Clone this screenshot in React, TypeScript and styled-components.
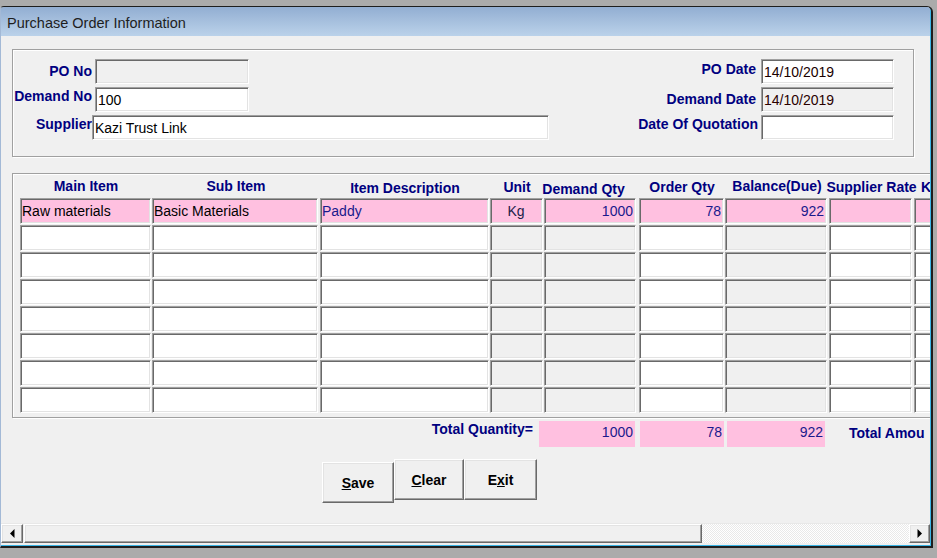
import React from "react";
import styled, { createGlobalStyle } from "styled-components";

const GlobalStyle = createGlobalStyle`
  html, body { margin: 0; padding: 0; background: #ababab; }
  body { font-family: "Liberation Sans", Arial, sans-serif; }
  * { box-sizing: border-box; }
`;

const NAVY = "#000080";
const PINK = "#ffc0e0";
const FACE = "#f0f0f0";

const Page = styled.div`
  height: 558px;
  padding-top: 6px;
  overflow: hidden;
  background: #ababab;
`;

const Window = styled.div`
  width: 933px;
  height: 542px;
  border-top: 1px solid #1e1e1e;
  border-right: 2px solid #1e1e1e;
  border-bottom: 2px solid #1e1e1e;
  border-left: 1px solid #a3b9d6;
  border-radius: 4px 6px 0 0;
  overflow: hidden;
  display: flex;
`;

const Frame = styled.div`
  flex: 1;
  display: flex;
  flex-direction: column;
  border-right: 1px solid #3ab5e6;
  border-bottom: 1px solid #3ab5e6;
  min-width: 0;
`;

const TitleBar = styled.div`
  height: 29px;
  flex-shrink: 0;
  display: flex;
  align-items: center;
  padding: 2px 0 0 6px;
  background: linear-gradient(#92aed2, #bbd2ea);
  font-size: 14.5px;
  color: #1e1e1e;
`;

const Body = styled.div`
  height: 509px;
  background: ${FACE};
  display: flex;
  flex-direction: column;
`;

const Canvas = styled.div`
  height: 487px;
  overflow: hidden;
  padding: 13px 0 0 11px;
`;

const GroupBox = styled.div`
  border: 1px solid #a0a0a0;
  box-shadow: inset 1px 1px 0 #fff, 1px 1px 0 #fff;
`;

const TopGroup = styled(GroupBox)`
  width: 902px;
  height: 108px;
  padding: 9px 19px 0 0;
  display: flex;
  justify-content: space-between;
  align-items: flex-start;
`;

const FieldCol = styled.div`
  display: flex;
  flex-direction: column;
  gap: 3px;
`;

const FieldRow = styled.div<{ $gap: number; $end?: boolean }>`
  display: flex;
  align-items: flex-start;
  justify-content: ${(p) => (p.$end ? "flex-end" : "flex-start")};
  gap: ${(p) => p.$gap}px;
  height: 25px;
`;

const Label = styled.div<{ $w?: number; $top: number }>`
  width: ${(p) => (p.$w ? `${p.$w}px` : "auto")};
  padding-top: ${(p) => p.$top}px;
  text-align: right;
  white-space: nowrap;
  font-size: 14px;
  line-height: 16px;
  font-weight: bold;
  color: ${NAVY};
`;

const sunken = `
  border: 1px solid;
  border-color: #a0a0a0 #fff #fff #a0a0a0;
  box-shadow: inset 1px 1px 0 #696969, inset -1px -1px 0 #e3e3e3;
`;

const TextBox = styled.div<{ $w: number; $bg?: string; $color?: string }>`
  ${sunken}
  width: ${(p) => p.$w}px;
  height: 25px;
  display: flex;
  align-items: center;
  padding: 0 2px;
  background: ${(p) => p.$bg ?? "#fff"};
  color: ${(p) => p.$color ?? "#000"};
  font-size: 14px;
  white-space: nowrap;
`;

const GridGroup = styled(GroupBox)`
  width: 1010px;
  height: 245px;
  margin-top: 16px;
  padding: 0 0 4px 7px;
`;

const HeadRow = styled.div`
  display: flex;
  height: 24px;
`;

const HeadCell = styled.div<{ $w: number; $top: number; $pr?: number; $left?: boolean }>`
  flex-shrink: 0;
  width: ${(p) => p.$w}px;
  display: flex;
  justify-content: ${(p) => (p.$left ? "flex-start" : "center")};
  padding: ${(p) => p.$top}px ${(p) => p.$pr ?? 0}px 0 ${(p) => (p.$left ? 7 : 0)}px;
  white-space: nowrap;
  font-size: 14px;
  line-height: 16px;
  font-weight: bold;
  color: ${NAVY};
`;

const Rows = styled.div`
  display: flex;
  flex-direction: column;
  gap: 1px;
`;

const Row = styled.div`
  display: flex;
  height: 26px;
`;

const Cell = styled.div<{ $w: number; $mr: number; $bg: string; $color?: string; $align?: string }>`
  ${sunken}
  flex-shrink: 0;
  width: ${(p) => p.$w}px;
  margin-right: ${(p) => p.$mr}px;
  height: 26px;
  display: flex;
  align-items: center;
  justify-content: ${(p) => p.$align ?? "flex-start"};
  padding: 0 2px 0 1px;
  background: ${(p) => p.$bg};
  color: ${(p) => p.$color ?? "#000"};
  font-size: 14px;
  white-space: nowrap;
`;

const TotalsRow = styled.div`
  display: flex;
  align-items: flex-start;
  height: 26px;
  margin-top: 3px;
`;

const TotalLabel = styled.div<{ $w?: number; $top: number; $ml?: number }>`
  width: ${(p) => (p.$w ? `${p.$w}px` : "auto")};
  margin-left: ${(p) => p.$ml ?? 0}px;
  flex-shrink: 0;
  padding-top: ${(p) => p.$top}px;
  text-align: right;
  white-space: nowrap;
  font-size: 14px;
  line-height: 16px;
  font-weight: bold;
  color: ${NAVY};
`;

const TotalBox = styled.div<{ $w: number; $ml: number }>`
  flex-shrink: 0;
  width: ${(p) => p.$w}px;
  height: 26px;
  margin-left: ${(p) => p.$ml}px;
  padding: 3px 2px 0 0;
  background: ${PINK};
  text-align: right;
  font-size: 14px;
  line-height: 16px;
  color: #1a1a8c;
`;

const ButtonRow = styled.div`
  display: flex;
  align-items: flex-start;
  margin-top: 12px;
  padding-left: 310px;
`;

const raised = `
  border: 1px solid;
  border-color: #fff #696969 #696969 #fff;
  box-shadow: inset -1px -1px 0 #a0a0a0, inset 1px 1px 0 #e3e3e3;
  background: ${FACE};
`;

const Button = styled.button<{ $w: number; $drop?: number }>`
  ${raised}
  width: ${(p) => p.$w}px;
  height: 41px;
  margin-top: ${(p) => p.$drop ?? 0}px;
  padding: 0;
  font-family: "Liberation Sans", Arial, sans-serif;
  font-size: 14px;
  font-weight: bold;
  color: #000;
`;

const ScrollBar = styled.div`
  height: 20px;
  display: flex;
  border-top: 1px solid #e8e8e8;
`;

const ArrowButton = styled.div<{ $w: number }>`
  ${raised}
  width: ${(p) => p.$w}px;
  flex-shrink: 0;
  display: flex;
  align-items: center;
  justify-content: center;
`;

const Thumb = styled.div`
  ${raised}
  width: 678px;
  margin-left: 1px;
  flex-shrink: 0;
`;

const Track = styled.div`
  flex: 1;
  background: repeating-conic-gradient(#ffffff 0% 25%, #e9e9e9 0% 50%) 0 0 / 2px 2px;
`;

const BottomStrip = styled.div`
  height: 2px;
  background: ${FACE};
`;

type Col = { title: string; w: number; mr: number; top: number; locked?: boolean; pr?: number; left?: boolean };

const columns: Col[] = [
  { title: "Main Item", w: 131, mr: 1, top: 4 },
  { title: "Sub Item", w: 166, mr: 2, top: 4 },
  { title: "Item Description", w: 169, mr: 1, top: 6 },
  { title: "Unit", w: 53, mr: 1, top: 5, locked: true },
  { title: "Demand Qty", w: 92, mr: 3, top: 7, locked: true, pr: 16 },
  { title: "Order Qty", w: 85, mr: 1, top: 5 },
  { title: "Balance(Due)", w: 102, mr: 2, top: 4, locked: true },
  { title: "Supplier Rate", w: 83, mr: 2, top: 5 },
  { title: "K", w: 80, mr: 0, top: 5, left: true },
];

const firstRow: { text: string; align?: string; color?: string }[] = [
  { text: "Raw materials" },
  { text: "Basic Materials" },
  { text: "Paddy", color: "#1a1a8c" },
  { text: "Kg", align: "center", color: "#22224a" },
  { text: "1000", align: "flex-end", color: "#1a1a8c" },
  { text: "78", align: "flex-end", color: "#1a1a8c" },
  { text: "922", align: "flex-end", color: "#1a1a8c" },
  { text: "" },
  { text: "" },
];

const ROWS = 8;

export default function App() {
  return (
    <Page>
      <GlobalStyle />
      <Window>
        <Frame>
          <TitleBar>Purchase Order Information</TitleBar>
          <Body>
            <Canvas>
              <TopGroup>
                <FieldCol>
                  <FieldRow $gap={3}>
                    <Label $w={79} $top={4}>PO No</Label>
                    <TextBox $w={154} $bg={FACE} />
                  </FieldRow>
                  <FieldRow $gap={3}>
                    <Label $w={79} $top={1}>Demand No</Label>
                    <TextBox $w={154}>100</TextBox>
                  </FieldRow>
                  <FieldRow $gap={0}>
                    <Label $w={79} $top={1}>Supplier</Label>
                    <TextBox $w={457}>Kazi Trust Link</TextBox>
                  </FieldRow>
                </FieldCol>
                <FieldCol>
                  <FieldRow $gap={5} $end>
                    <Label $top={2}>PO Date</Label>
                    <TextBox $w={133} $color="#1a0000">14/10/2019</TextBox>
                  </FieldRow>
                  <FieldRow $gap={5} $end>
                    <Label $top={4}>Demand Date</Label>
                    <TextBox $w={133} $bg={FACE} $color="#2a0000">14/10/2019</TextBox>
                  </FieldRow>
                  <FieldRow $gap={3} $end>
                    <Label $top={1}>Date Of Quotation</Label>
                    <TextBox $w={133} />
                  </FieldRow>
                </FieldCol>
              </TopGroup>

              <GridGroup>
                <HeadRow>
                  {columns.map((c) => (
                    <HeadCell key={c.title} $w={c.w + c.mr} $top={c.top} $pr={c.pr} $left={c.left}>
                      {c.title}
                    </HeadCell>
                  ))}
                </HeadRow>
                <Rows>
                  {Array.from({ length: ROWS }).map((_, r) => (
                    <Row key={r}>
                      {columns.map((c, i) => {
                        const bg = r === 0 ? PINK : c.locked ? FACE : "#fff";
                        const d = r === 0 ? firstRow[i] : { text: "" };
                        return (
                          <Cell key={c.title} $w={c.w} $mr={c.mr} $bg={bg} $color={d.color} $align={d.align}>
                            {d.text}
                          </Cell>
                        );
                      })}
                    </Row>
                  ))}
                </Rows>
              </GridGroup>

              <TotalsRow>
                <TotalLabel $w={521} $top={0}>Total Quantity=</TotalLabel>
                <TotalBox $w={96} $ml={6}>1000</TotalBox>
                <TotalBox $w={84} $ml={5}>78</TotalBox>
                <TotalBox $w={98} $ml={3}>922</TotalBox>
                <TotalLabel $ml={24} $top={4}>Total Amou</TotalLabel>
              </TotalsRow>

              <ButtonRow>
                <Button $w={72} $drop={3}><u>S</u>ave</Button>
                <Button $w={70}><u>C</u>lear</Button>
                <Button $w={73}>E<u>x</u>it</Button>
              </ButtonRow>
            </Canvas>

            <ScrollBar>
              <ArrowButton $w={22}>
                <svg width="5" height="9" viewBox="0 0 5 9">
                  <polygon points="4.5,0 4.5,9 0,4.5" fill="#000" />
                </svg>
              </ArrowButton>
              <Thumb />
              <Track />
              <ArrowButton $w={21}>
                <svg width="5" height="9" viewBox="0 0 5 9">
                  <polygon points="0.5,0 5,4.5 0.5,9" fill="#000" />
                </svg>
              </ArrowButton>
            </ScrollBar>
            <BottomStrip />
          </Body>
        </Frame>
      </Window>
    </Page>
  );
}
